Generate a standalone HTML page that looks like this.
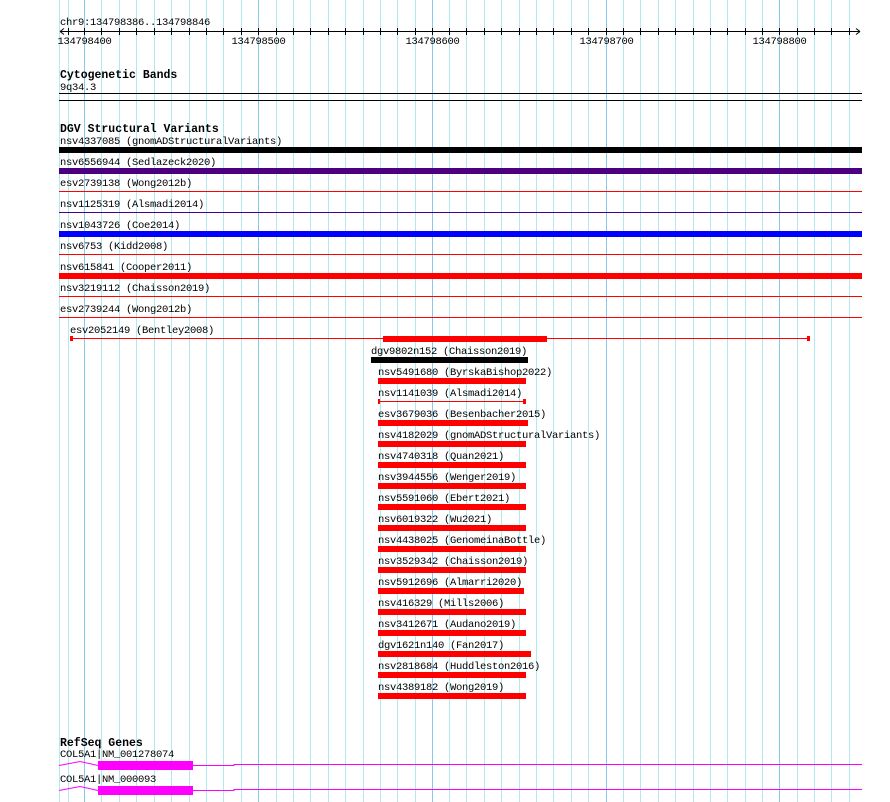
<!DOCTYPE html>
<html><head><meta charset="utf-8"><style>
html,body{margin:0;padding:0;background:#fff;}
svg{display:block;}
text{font-family:"Liberation Mono",monospace;font-size:10.5px;letter-spacing:-0.3px;fill:#000;}
.h{font-weight:bold;font-size:11.5px;letter-spacing:0px;}
</style></head><body>
<svg width="890" height="802" viewBox="0 0 890 802" xmlns="http://www.w3.org/2000/svg">
<path stroke="#aeeaf0" stroke-width="1" fill="none" d="M59.5 0V802M68.5 0V802M101.5 0V802M119.5 0V802M136.5 0V802M154.5 0V802M171.5 0V802M189.5 0V802M206.5 0V802M223.5 0V802M241.5 0V802M276.5 0V802M293.5 0V802M310.5 0V802M328.5 0V802M345.5 0V802M363.5 0V802M380.5 0V802M397.5 0V802M415.5 0V802M449.5 0V802M466.5 0V802M484.5 0V802M501.5 0V802M519.5 0V802M536.5 0V802M553.5 0V802M571.5 0V802M588.5 0V802M623.5 0V802M640.5 0V802M658.5 0V802M675.5 0V802M693.5 0V802M710.5 0V802M727.5 0V802M745.5 0V802M762.5 0V802M797.5 0V802M814.5 0V802M831.5 0V802M849.5 0V802"/>
<path stroke="#86c8ee" stroke-width="1" fill="none" d="M84.5 0V802M258.5 0V802M432.5 0V802M606.5 0V802M779.5 0V802"/>
<text x="60" y="25">chr9:134798386..134798846</text>
<path stroke="#000" stroke-width="1" fill="none" d="M60 31.5H860M60 31.5l4 -3M60 31.5l4 3M860 31.5l-4 -3M860 31.5l-4 3
M68.5 28V35M84.5 28V35M101.5 28V35M119.5 28V35M136.5 28V35M154.5 28V35M171.5 28V35M189.5 28V35M206.5 28V35M223.5 28V35M241.5 28V35M258.5 28V35M276.5 28V35M293.5 28V35M310.5 28V35M328.5 28V35M345.5 28V35M363.5 28V35M380.5 28V35M397.5 28V35M415.5 28V35M432.5 28V35M449.5 28V35M466.5 28V35M484.5 28V35M501.5 28V35M519.5 28V35M536.5 28V35M553.5 28V35M571.5 28V35M588.5 28V35M606.5 28V35M623.5 28V35M640.5 28V35M658.5 28V35M675.5 28V35M693.5 28V35M710.5 28V35M727.5 28V35M745.5 28V35M762.5 28V35M779.5 28V35M797.5 28V35M814.5 28V35M831.5 28V35M849.5 28V35"/>
<text x="84.5" y="44" text-anchor="middle">134798400</text>
<text x="258.5" y="44" text-anchor="middle">134798500</text>
<text x="432.5" y="44" text-anchor="middle">134798600</text>
<text x="606.5" y="44" text-anchor="middle">134798700</text>
<text x="779.5" y="44" text-anchor="middle">134798800</text>
<text class="h" x="60" y="78">Cytogenetic Bands</text>
<text x="60" y="90">9q34.3</text>
<rect x="59" y="93" width="803" height="1" fill="#000"/>
<rect x="59" y="100" width="803" height="1" fill="#000"/>
<text class="h" x="60" y="132">DGV Structural Variants</text>
<text x="60" y="144">nsv4337085 (gnomADStructuralVariants)</text>
<rect x="59" y="147" width="803" height="6" fill="#000"/>
<text x="60" y="165">nsv6556944 (Sedlazeck2020)</text>
<rect x="59" y="168" width="803" height="6" fill="#4b0082"/>
<text x="60" y="186">esv2739138 (Wong2012b)</text>
<rect x="59" y="191" width="803" height="1" fill="#f00"/>
<text x="60" y="207">nsv1125319 (Alsmadi2014)</text>
<rect x="59" y="212" width="803" height="1" fill="#4b0082"/>
<text x="60" y="228">nsv1043726 (Coe2014)</text>
<rect x="59" y="231" width="803" height="6" fill="#00f"/>
<text x="60" y="249">nsv6753 (Kidd2008)</text>
<rect x="59" y="254" width="803" height="1" fill="#f00"/>
<text x="60" y="270">nsv615841 (Cooper2011)</text>
<rect x="59" y="273" width="803" height="6" fill="#f00"/>
<text x="60" y="291">nsv3219112 (Chaisson2019)</text>
<rect x="59" y="296" width="803" height="1" fill="#f00"/>
<text x="60" y="312">esv2739244 (Wong2012b)</text>
<rect x="59" y="317" width="803" height="1" fill="#f00"/>
<text x="70" y="333">esv2052149 (Bentley2008)</text>
<rect x="70" y="338" width="740" height="1" fill="#f00"/>
<rect x="70" y="336" width="3" height="5" fill="#f00"/>
<rect x="807" y="336" width="3" height="5" fill="#f00"/>
<rect x="383" y="336" width="164" height="6" fill="#f00"/>
<text x="371" y="354">dgv9802n152 (Chaisson2019)</text>
<rect x="371" y="357" width="157" height="6" fill="#000"/>
<text x="378" y="375">nsv5491680 (ByrskaBishop2022)</text>
<rect x="378" y="378" width="148" height="6" fill="#f00"/>
<text x="378" y="396">nsv1141039 (Alsmadi2014)</text>
<rect x="378" y="401" width="147" height="1" fill="#f00"/>
<rect x="378" y="399" width="2" height="5" fill="#f00"/>
<rect x="523" y="399" width="3" height="5" fill="#f00"/>
<text x="378" y="417">esv3679036 (Besenbacher2015)</text>
<rect x="378" y="420" width="150" height="6" fill="#f00"/>
<text x="378" y="438">nsv4182029 (gnomADStructuralVariants)</text>
<rect x="378" y="441" width="148" height="6" fill="#f00"/>
<text x="378" y="459">nsv4740318 (Quan2021)</text>
<rect x="378" y="462" width="148" height="6" fill="#f00"/>
<text x="378" y="480">nsv3944556 (Wenger2019)</text>
<rect x="378" y="483" width="148" height="6" fill="#f00"/>
<text x="378" y="501">nsv5591060 (Ebert2021)</text>
<rect x="378" y="504" width="148" height="6" fill="#f00"/>
<text x="378" y="522">nsv6019322 (Wu2021)</text>
<rect x="378" y="525" width="148" height="6" fill="#f00"/>
<text x="378" y="543">nsv4438025 (GenomeinaBottle)</text>
<rect x="378" y="546" width="148" height="6" fill="#f00"/>
<text x="378" y="564">nsv3529342 (Chaisson2019)</text>
<rect x="378" y="567" width="148" height="6" fill="#f00"/>
<text x="378" y="585">nsv5912696 (Almarri2020)</text>
<rect x="378" y="588" width="146" height="6" fill="#f00"/>
<text x="378" y="606">nsv416329 (Mills2006)</text>
<rect x="378" y="609" width="148" height="6" fill="#f00"/>
<text x="378" y="627">nsv3412671 (Audano2019)</text>
<rect x="378" y="630" width="148" height="6" fill="#f00"/>
<text x="378" y="648">dgv1621n140 (Fan2017)</text>
<rect x="378" y="651" width="153" height="6" fill="#f00"/>
<text x="378" y="669">nsv2818684 (Huddleston2016)</text>
<rect x="378" y="672" width="148" height="6" fill="#f00"/>
<text x="378" y="690">nsv4389182 (Wong2019)</text>
<rect x="378" y="693" width="148" height="6" fill="#f00"/>
<text class="h" x="60" y="746">RefSeq Genes</text>
<text x="60" y="757">COL5A1|NM_001278074</text>
<path stroke="#f0f" stroke-width="1" fill="none" d="M59 765.5L80 761.5L98 765.5M193 765.5H234V764.5H862"/>
<rect x="98" y="761" width="95" height="9" fill="#f0f"/>
<text x="60" y="782">COL5A1|NM_000093</text>
<path stroke="#f0f" stroke-width="1" fill="none" d="M59 790.5L80 786.5L98 790.5M193 790.5H234V789.5H862"/>
<rect x="98" y="786" width="95" height="9" fill="#f0f"/>
</svg>
</body></html>
